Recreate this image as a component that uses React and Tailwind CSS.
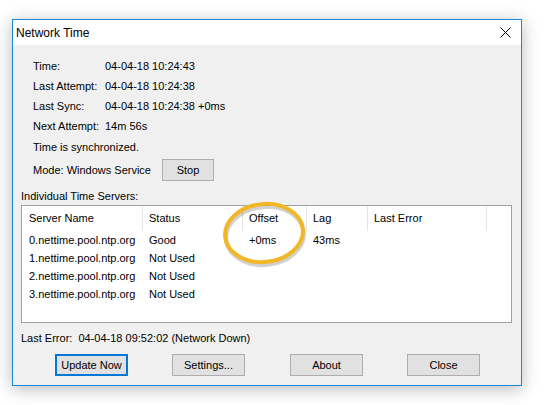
import React from 'react';

const font = { fontFamily: '"Liberation Sans", Arial, sans-serif' };

const status = [
  { label: 'Time:', value: '04-04-18 10:24:43' },
  { label: 'Last Attempt:', value: '04-04-18 10:24:38' },
  { label: 'Last Sync:', value: '04-04-18 10:24:38 +0ms' },
  { label: 'Next Attempt:', value: '14m 56s' },
];

const columns = ['Server Name', 'Status', 'Offset', 'Lag', 'Last Error'];

const servers = [
  ['0.nettime.pool.ntp.org', 'Good', '+0ms', '43ms', ''],
  ['1.nettime.pool.ntp.org', 'Not Used', '', '', ''],
  ['2.nettime.pool.ntp.org', 'Not Used', '', '', ''],
  ['3.nettime.pool.ntp.org', 'Not Used', '', '', ''],
];

const gridCols = 'grid grid-cols-[121px_100px_64px_61px_119px_1fr]';

const Button = ({ children, primary, className = '' }) => (
  <button
    className={`h-[22px] w-[73px] flex items-center justify-center text-[11px] text-black bg-[#e1e1e1] ${
      primary ? 'border-2 border-[#0078d7]' : 'border border-[#adadad]'
    } ${className}`}
  >
    {children}
  </button>
);

export default function App() {
  return (
    <div className="w-[546px] h-[405px] bg-white pl-[12px] pt-[19px]" style={font}>
      <div className="relative w-[510px] h-[367px] border border-[#1b87d8] bg-[#f0f0f0] flex flex-col shadow-[0_3px_16px_rgba(0,0,0,0.28)]">
        {/* Title bar */}
        <div className="h-[25px] bg-white flex items-center justify-between pl-[3px] pr-[10px] shrink-0">
          <span className="text-[12px] text-black">Network Time</span>
          <svg width="11" height="11" viewBox="0 0 11 11" className="text-black">
            <path d="M0.5 0.5 L10.5 10.5 M10.5 0.5 L0.5 10.5" stroke="currentColor" strokeWidth="1" />
          </svg>
        </div>

        <div className="flex flex-col pt-[11px] text-[11px] text-black">
          {/* Status block */}
          <div className="flex flex-col pl-[20px]">
            {status.map(s => (
              <div key={s.label} className="h-5 flex items-center">
                <span className="w-[72px]">{s.label}</span>
                <span>{s.value}</span>
              </div>
            ))}
            <div className="h-5 flex items-center mt-px">Time is synchronized.</div>
            <div className="h-[22px] flex items-center mt-[2px]">
              <span className="w-[129px]">Mode: Windows Service</span>
              <button className="h-[22px] w-[52px] bg-[#e1e1e1] border border-[#adadad] text-[11px]">Stop</button>
            </div>
          </div>

          <div className="h-[18px] flex items-center pl-[8px] mt-[6px]">Individual Time Servers:</div>

          {/* Server list */}
          <div className="ml-[8px] w-[491px] h-[118px] border border-[#a0a0a0] bg-white flex flex-col">
            <div className={`${gridCols} h-[25px]`}>
              {columns.map((c, i) => (
                <div
                  key={c}
                  className={`flex items-center border-r border-[#e5e5e5] ${i === 0 ? 'pl-[7px]' : 'pl-[6px]'}`}
                >
                  {c}
                </div>
              ))}
              <div />
            </div>
            {servers.map(row => (
              <div key={row[0]} className={`${gridCols} h-[18px]`}>
                {row.map((cell, i) => (
                  <div key={i} className={`flex items-center ${i === 0 ? 'pl-[7px]' : 'pl-[6px]'}`}>
                    {cell}
                  </div>
                ))}
                <div />
              </div>
            ))}
          </div>

          <div className="h-5 flex items-center pl-[8px] mt-[5px]">
            Last Error:&nbsp; 04-04-18 09:52:02 (Network Down)
          </div>

          {/* Buttons */}
          <div className="flex items-center mt-[6px] pl-[42px]">
            <Button primary className="w-[72px]">Update Now</Button>
            <Button className="ml-[44px] w-[72px]">Settings...</Button>
            <Button className="ml-[45px]">About</Button>
            <Button className="ml-[44px]">Close</Button>
          </div>
        </div>

        {/* Highlight ring around the Offset column */}
        <svg
          className="absolute left-[206px] top-[179px] w-[92px] h-[72px] pointer-events-none"
          viewBox="0 0 92 72"
        >
          <ellipse cx="46" cy="37" rx="39" ry="29" fill="none" stroke="rgba(0,0,0,0.18)" strokeWidth="4" transform="rotate(-6 46 37)" />
          <ellipse cx="45" cy="34" rx="39" ry="29" fill="none" stroke="#f1b727" strokeWidth="4" transform="rotate(-6 45 34)" />
        </svg>
      </div>
    </div>
  );
}
